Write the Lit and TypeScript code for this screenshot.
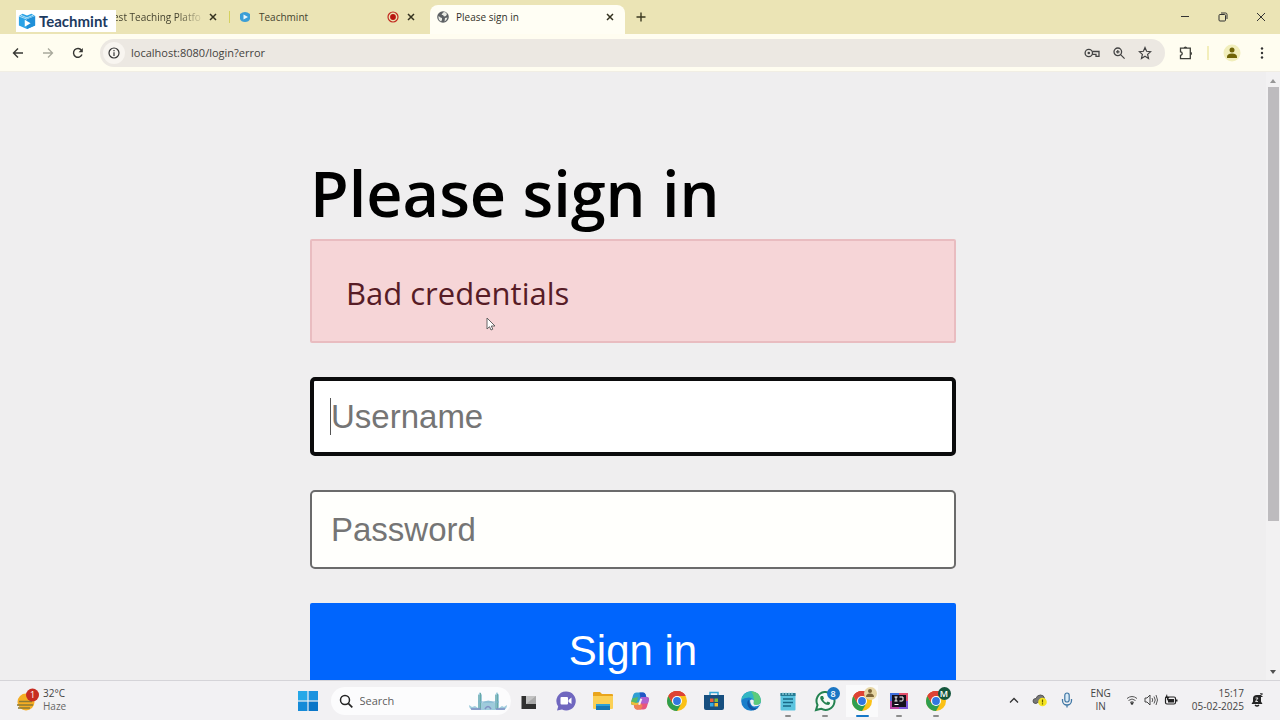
import { LitElement, html, css, svg, TemplateResult } from "lit";
import { customElement, property } from "lit/decorators.js";

const icon = (w: number, h: number, box: string, body: TemplateResult) =>
  html`<svg width=${w} height=${h} viewBox=${box} fill="none" aria-hidden="true">${body}</svg>`;

const chromeMark = svg`
  <circle cx="10" cy="10" r="10" fill="#fbc116"/>
  <path d="M10 10 1.34 5A10 10 0 0 1 18.66 5L10 5Z" fill="#dd4335"/>
  <path d="M1.34 5A10 10 0 0 0 10 20L14.3 12.5 10 10 5.7 12.5Z" fill="#2f9e4f"/>
  <path d="M10 5h8.66A10 10 0 0 0 1.34 5L5.7 12.5A5 5 0 0 1 10 5Z" fill="#dd4335"/>
  <circle cx="10" cy="10" r="5" fill="#fff"/><circle cx="10" cy="10" r="3.9" fill="#3277e0"/>`;

const close = icon(8, 8, "0 0 8 8", svg`<path d="m1 1 6 6M7 1 1 7" stroke="#34321f" stroke-width="1.5"/>`);

const bookMark = svg`
  <path d="M1 4.500 5 2l5 2 5-2 4 2.500V15l-9 4-9-4Z" fill="#2ba3e6"/>
  <path d="m1 4.500 9 3.500 9-3.500M3 3.500l7 3 7-3" stroke="#d3eefb" stroke-width=".9"/>
  <path d="M10 8v11l9-4V4.500Z" fill="#1f8fd8"/>
  <path d="m7.500 8.500 6.500 4-6.500 4Z" fill="#fff"/>`;

const I = {
  book: icon(18, 18, "0 0 20 20", bookMark),
  favicon: icon(12, 12, "0 0 12 12", svg`<path d="M1 3q5-4 10 0v5q-1 3-5 3T1 8Z" fill="#3b9ed6"/><path d="M4.500 3.500 9 6 4.500 8.500Z" fill="#eaf6fc"/>`),
  rec: icon(12, 12, "0 0 12 12", svg`<circle cx="6" cy="6" r="5" stroke="#c22a20" stroke-width="1.200"/><circle cx="6" cy="6" r="2.900" fill="#b8150f"/>`),
  globe: icon(12, 12, "0 0 12 12", svg`<circle cx="6" cy="6" r="5.800" fill="#5c6063"/><path d="M1.500 5 3.500 6.500 5 7v2L4 10.500Q1 9 1.500 5ZM6 1.500 8 1l2 2-1 2-2 .5L6 4 4.500 4ZM8 7l2.500-.5Q10 9 7.500 10.500Z" fill="#e9ebe4"/>`),
  plus: icon(10, 10, "0 0 10 10", svg`<path d="M5 .5v9M.5 5h9" stroke="#3b3920" stroke-width="1.400"/>`),
  min: icon(10, 10, "0 0 10 10", svg`<path d="M1 4.500h8" stroke="#333"/>`),
  restore: icon(10, 10, "0 0 10 10", svg`<rect x="1" y="2.500" width="6.500" height="6.500" rx="1" stroke="#333"/><path d="M3 1h4.500Q9 1 9 2.500V7" stroke="#333"/>`),
  x: icon(10, 10, "0 0 10 10", svg`<path d="m1 1 8 8M9 1 1 9" stroke="#333"/>`),
  back: icon(12, 12, "0 0 12 12", svg`<path d="M11 6H1.500M6 1.500 1.500 6 6 10.500" stroke="#373733" stroke-width="1.400"/>`),
  fwd: icon(12, 12, "0 0 12 12", svg`<path d="M1 6h9.500M6 1.500 10.500 6 6 10.500" stroke="#a9a99c" stroke-width="1.300"/>`),
  reload: icon(12, 12, "0 0 12 12", svg`<path d="M10 7.500A4.400 4.400 0 1 1 9.500 3.300" stroke="#373733" stroke-width="1.400"/><path d="M10.800 1v4.200H6.600Z" fill="#373733"/>`),
  info: icon(12, 12, "0 0 12 12", svg`<circle cx="6" cy="6" r="5" stroke="#333" stroke-width="1.200"/><path d="M6 5.200V9M6 3v1.300" stroke="#333" stroke-width="1.200"/>`),
  key: icon(16, 12, "0 0 16 12", svg`<circle cx="4.800" cy="6" r="3.700" stroke="#444" stroke-width="1.300"/><circle cx="4.800" cy="6" r="1.300" fill="#444"/><path d="M8.300 4.500H15V9.300h-3V7.300H8.300" stroke="#444" stroke-width="1.300"/>`),
  zoom: icon(12, 12, "0 0 12 12", svg`<circle cx="4.800" cy="4.800" r="3.800" stroke="#444" stroke-width="1.300"/><path d="m7.600 7.600 4 4M3 4.800h3.600M4.800 3v3.600" stroke="#444" stroke-width="1.200"/>`),
  star: icon(14, 14, "0 0 14 14", svg`<path d="m7 1.600 1.600 3.700 4 .4-3 2.700.9 4L7 10.300l-3.500 2.100.9-4-3-2.700 4-.4Z" stroke="#444" stroke-width="1.200"/>`),
  puzzle: icon(14, 14, "0 0 14 14", svg`<path d="M1.500 2.200H11.300v10.500H1.500V9.300a1.700 1.700 0 0 0 0-3.400Z" stroke="#3e3e38" stroke-width="1.300"/><path d="M4.700 2a1.700 1.500 0 0 1 3.400 0ZM11.500 5.800a1.500 1.700 0 0 1 0 3.400Z" fill="#3e3e38"/>`),
  dots: icon(4, 14, "0 0 4 14", svg`<circle cx="2" cy="2.500" r="1.200" fill="#333"/><circle cx="2" cy="7" r="1.200" fill="#333"/><circle cx="2" cy="11.500" r="1.200" fill="#333"/>`),
  person: icon(18, 18, "0 0 18 18", svg`<circle cx="9" cy="9" r="8.500" fill="#f1eebb"/><circle cx="9" cy="6" r="2.500" fill="#6f6406"/><path d="M4 13q0-3.500 5-3.500t5 3.500v1H4Z" fill="#6f6406"/>`),
  weather: icon(24, 24, "0 0 24 24", svg`<circle cx="11" cy="14" r="8.500" fill="#f5ae24"/><path d="M4 13.500h13M2 17h16M3 20h12" stroke="#8b7a35" stroke-width="1.300"/><circle cx="17.500" cy="7" r="6.500" fill="#c72d23"/>`),
  win: icon(20, 20, "0 0 20 20", svg`<path d="M0 0h9.400v9.400H0Z" fill="#25a8e8"/><path d="M10.600 0H20v9.400h-9.400Z" fill="#1c93df"/><path d="M0 10.600h9.400V20H0Z" fill="#168bd8"/><path d="M10.600 10.600H20V20h-9.400Z" fill="#0a76c8"/>`),
  search: icon(14, 14, "0 0 14 14", svg`<circle cx="6" cy="6" r="4.500" stroke="#242424" stroke-width="1.500"/><path d="m9.300 9.300 4 4" stroke="#242424" stroke-width="1.700"/>`),
  bridge: icon(40, 20, "0 0 40 20", svg`<path d="M1 14q0 5 5 5h28q5 0 5-5l-3 2-2-1-3 2V4l-2-3-2 3v8q-7-5-13 0V4l-2-3-2 3v13l-3-2-3 1Z" fill="#9fcbdc"/><path d="M11 4v14M12.500 2v16M28 4v14M29.500 3v15" stroke="#69aaa8"/><path d="M3 18h10M28 18h9M17 18q3-5 6 0" stroke="#8191c4" stroke-width="1.500"/><path d="M10 11h21" stroke="#7fb5cf"/>`),
  task: icon(20, 20, "0 0 20 20", svg`<path d="M7 5h10v8H7Z" fill="#c3c3c3"/><path d="M2.500 5H7v8h10v5H2.500Z" fill="#303030"/><path d="M7 13 17 5v8Z" fill="#a9a9a9"/>`),
  chat: icon(20, 20, "0 0 20 20", svg`<path d="M10 .5a9.500 9.500 0 1 1-4 18L1 19.500l1.200-4A9.500 9.500 0 0 1 10 .5Z" fill="#7067bf"/><rect x="4.500" y="6" width="7.500" height="7.500" rx="1" fill="#fff"/><path d="m12.500 9 3-2.500v6.500l-3-2Z" fill="#fff"/>`),
  folder: icon(22, 20, "0 0 22 20", svg`<path d="M1 2q0-1 1-1h6l2 2h10q1 0 1 1v4H1Z" fill="#e9a51c"/><path d="M1 5h20v12q0 1-1 1H2q-1 0-1-1Z" fill="#fbd055"/><path d="M4 13h14v6H4Z" fill="#1878b5"/><path d="M4 13h14v2H4Z" fill="#2da1d8"/>`),
  copilot: icon(20, 20, "0 0 20 20", svg`
    <path d="M6.500 1.500H13q2 0 2.600 2l.7 2.500H13q-1.800 0-2.300 2L9 14H3.500q-3 0-2.400-3L3 4.500q.8-3 3.500-3Z" fill="#2f9fd4"/>
    <path d="M9.500 1.500H13q2 0 2.600 2l.7 2.500H13q-1.800 0-2.300 2Z" fill="#2257c6"/>
    <path d="M2.200 7.500 1.100 11q-.6 3 2.400 3H5q1 0 1.500-2L8 6Z" fill="#58b966"/>
    <path d="M1.200 10.500q-.8 3.500 2.300 3.500H5l1 3q.5 1.500 2 1.500L9.300 14 10 11 6 12Z" fill="#eebd3a"/>
    <path d="M13.500 18.500H7q-2 0-2.600-2L3.700 14H7q1.800 0 2.300-2L11 6h5.500q3 0 2.400 3L17 15.500q-.8 3-3.500 3Z" fill="#e8557f"/>
    <path d="M11 6h5.500q3 0 2.400 3l-1 3.500H9.300Z" fill="#b061cf"/>
    <path d="M4 14h3q1.800 0 2.300-2l.4-1 3 4-2 3.500H7q-2 0-2.600-2Z" fill="#f08255"/>
    <path d="m10.300 7.500 2 .5-2.200 6-2-.5Z" fill="#f4eef4"/>`),
  chrome: icon(20, 20, "0 0 20 20", chromeMark),
  store: icon(20, 20, "0 0 20 20", svg`<path d="M6 5V1.500h8V5" stroke="#35a6d6" stroke-width="1.500"/><path d="M0 4h20v13q0 2-2 2H2q-2 0-2-2Z" fill="#174f7f"/><path d="M6 7.500h3.500V11H6Z" fill="#ee5c37"/><path d="M10.500 7.500H14V11h-3.500Z" fill="#82b93a"/><path d="M6 12h3.500v3.500H6Z" fill="#34a9e5"/><path d="M10.500 12H14v3.500h-3.500Z" fill="#f7be2b"/>`),
  edge: icon(20, 20, "0 0 20 20", svg`
    <circle cx="10" cy="10" r="9.800" fill="#1a7fcb"/>
    <path d="M.3 9A9.800 9.800 0 0 1 19.800 9q.3 5-4.800 5-3.500 0-2.500-2.500 1-4.500-4.500-5Q3 6.500.3 9Z" fill="#33b6c2"/>
    <path d="M10 .2Q19 .5 19.800 9q.3 5-4.800 5-3.500 0-2.500-2.500Q14 5 10 .2Z" fill="#5ccb7b"/>
    <path d="M7.500 8.500q-3 4.500 1 9 4 3.500 8.500-.5-8 1.500-9.500-8.500Z" fill="#1256a5"/>
    <path d="M12.600 9.300q-3 3.200-.4 5 3.500 2 7.300-.8v-1q-2 1.500-4.500 1.500-3.500 0-2.500-2.500Z" fill="#f2f1f3"/>
    <path d="M9 9.500q2-2 3.700 0-.8 2-.2 3.700l2 2.300q-5 .5-5.500-6Z" fill="#f2f1f3"/>`),
  note: icon(18, 20, "0 0 18 20", svg`<rect x="1.500" y="2" width="15" height="17.500" rx="1" fill="#5cc4df"/><path d="M1.500 2h15v3h-15Z" fill="#277b92"/><path d="M4 1v3M7 1v3M10 1v3M13 1v3" stroke="#b6e7f1"/><path d="M4 8h10M4 11.500h10M4 15h8" stroke="#176887" stroke-width="1.300"/>`),
  whatsapp: icon(22, 22, "0 0 22 22", svg`<path d="m2 20 1.500-5A9 9 0 1 1 7 18.700Z" fill="#f5faf6" stroke="#248250" stroke-width="2"/><path d="M7 6q-2 2 1 5.500t6.500 3.500q2-1 1.500-2.500l-2.500-1-1 1.200q-2-.5-3.500-3l1-1.200L9 6Z" fill="#248250"/>`),
  idea: icon(18, 20, "0 0 18 20", svg`<path d="M0 2h9l9 1v15H0Z" fill="#b743a0"/><path d="M0 2h9v8H0Z" fill="#3f6fdc"/><path d="M9 2h9v8H9Z" fill="#e2506b"/><path d="M9 10h9v8H9Z" fill="#7a55d8"/><rect x="2" y="4" width="14" height="12" fill="#14101c"/><path d="M4.500 6h3M6 6v4M4.500 10h3M9.500 6H13v3q0 1-1 1H9.500" stroke="#fff"/><path d="M4.500 13.500h4" stroke="#fff"/>`),
  up: icon(10, 8, "0 0 10 8", svg`<path d="m1 6.500 4-4 4 4" stroke="#333" stroke-width="1.300"/>`),
  cloud: icon(16, 14, "0 0 16 14", svg`<path d="M4 10.500Q1 10.500 1 8t3-2.500Q5 2 8.500 2t4 3.500Z" fill="#777" stroke="#565656"/><circle cx="10.500" cy="9" r="4.300" fill="#f4e421"/><path d="M10.500 6.500v3M10.500 10.300v1.200" stroke="#655c00" stroke-width="1.200"/>`),
  mic: icon(12, 16, "0 0 12 16", svg`<rect x="3.800" y="1" width="4.400" height="9" rx="2.200" fill="#d9ebf7" stroke="#4178a5" stroke-width="1.200"/><path d="M1.500 7v1.500a4.500 4.500 0 0 0 9 0V7M6 13v2.500" stroke="#4178a5" stroke-width="1.300"/>`),
  wifi: icon(12, 12, "0 0 12 12", svg`<path d="M1 4.500q5-4 10 0M2.500 6.500q3.500-3 7 0M4 8.500q2-1.700 4 0" stroke="#555"/><circle cx="6" cy="9.500" r="1.300" fill="#333"/>`),
  sound: icon(14, 12, "0 0 14 12", svg`<path d="M1 4h2l3-3v10L3 8H1Z" stroke="#444"/><path d="M8 4q1.500 2 0 4M10 2.500q2.500 3.500 0 7M12 1q3 5 0 10" stroke="#555"/>`),
  battery: icon(14, 12, "0 0 14 12", svg`<rect x="1.500" y="3" width="10" height="7" rx="1.500" stroke="#222" stroke-width="1.200"/><path d="M4 5h6v3.500H4ZM12 5.500h1.500v2H12Z" fill="#222"/><path d="M3 0 1 4h2v3l2.500-4h-2Z" fill="#222"/>`),
  bell: icon(12, 14, "0 0 12 14", svg`<path d="M.5 11 2 8.500V5.500Q2 2 6 2h4v6.500l1.500 2.500Z" fill="#242424"/><path d="M4 12q2 2 4 0" stroke="#242424" stroke-width="1.300"/><path d="M4.500 5H7L4.500 8.500H7" stroke="#ddd"/><path d="M9 .8h2.500L9 3.500h2.500" stroke="#242424"/>`),
  cursor: icon(10, 14, "0 0 10 14", svg`<path d="M1 1v11l2.500-2.300L5 13l1.800-.8L5.300 9H9Z" fill="#fff" stroke="#555" stroke-width=".9"/>`),
};

@customElement("browser-tabs")
class BrowserTabs extends LitElement {
  static styles = css`
    :host { display: flex; height: 34px; background: #ebe4b5; position: relative; font-size: 10px; line-height: 14px; color: #45432f; }
    .tab { display: flex; align-items: center; box-sizing: border-box; min-width: 0; }
    .first { flex: 0 1 229px; padding: 0 12px 0 113px; gap: 4px; }
    .second { flex: 0 1 201px; padding: 0 15px 0 9px; gap: 8px; border-left: 1px solid #dad67a; border-image: linear-gradient(transparent 34%, #d5d160 34%, #d5d160 66%, transparent 66%) 1; }
    .active { flex: 0 1 195px; margin-top: 5px; padding: 0 11px 5px 7px; gap: 7px; background: #fffef4; border-radius: 8px 8px 0 0; color: #33322a; }
    .title { flex: 1; white-space: nowrap; }
    .fade { mask-image: linear-gradient(90deg, #000 70%, transparent); }
    svg { flex: none; display: block; }
    button { border: 0; padding: 0; background: none; display: grid; place-items: center; }
    .add { width: 32px; }
    .controls { margin-left: auto; display: flex; gap: 28px; padding-right: 14px; }
    .brand { position: absolute; left: 16px; top: 10px; height: 22px; width: 100px; box-sizing: border-box; padding-left: 2px; background: #fff; display: flex; align-items: center; gap: 3px; color: #1d3a5f; font: 700 15px/20px Lato, sans-serif; }
  `;
  render() {
    return html`
      <div class="tab first"><span class="title fade">est Teaching Platfo</span><button aria-label="Close tab">${close}</button></div>
      <div class="tab second">${I.favicon}<span class="title">Teachmint</span>${I.rec}<button aria-label="Close tab">${close}</button></div>
      <div class="tab active">${I.globe}<span class="title">Please sign in</span><button aria-label="Close tab">${close}</button></div>
      <button class="add" aria-label="New tab">${I.plus}</button>
      <div class="controls">
        <button aria-label="Minimize">${I.min}</button><button aria-label="Restore">${I.restore}</button><button aria-label="Close">${I.x}</button>
      </div>
      <div class="brand">${I.book}<span>Teachmint</span></div>`;
  }
}

@customElement("browser-toolbar")
class BrowserToolbar extends LitElement {
  static styles = css`
    :host { display: flex; align-items: center; height: 38px; box-sizing: border-box; background: #fffdf0; border-bottom: 1px solid #f1eee4; padding: 0 16px 0 12px; }
    button { border: 0; padding: 0; background: none; display: grid; place-items: center; }
    .nav { display: flex; gap: 18px; }
    .address { flex: 1; display: flex; align-items: center; gap: 6px; height: 28px; margin: 0 14px 0 16px; padding: 0 13px 0 3px; border-radius: 14px; background: #ece8e2; }
    .info { width: 22px; height: 22px; border-radius: 11px; background: #f8f5f0; }
    input { flex: 1; min-width: 0; border: 0; padding: 0; background: none; outline: 0; color: #45433e; font: 11px/18px "Open Sans", sans-serif; }
    .actions { display: flex; align-items: center; gap: 13px; }
    .tools { display: flex; align-items: center; gap: 14px; }
    .menu { padding-left: 5px; }
    .rule { width: 2px; height: 14px; background: #f3eebb; }
    svg { display: block; }
  `;
  render() {
    return html`
      <div class="nav"><button aria-label="Back">${I.back}</button><button aria-label="Forward">${I.fwd}</button><button aria-label="Reload">${I.reload}</button></div>
      <div class="address">
        <button class="info" aria-label="Site information">${I.info}</button>
        <input aria-label="Address" value="localhost:8080/login?error" />
        <div class="actions"><button aria-label="Passwords">${I.key}</button><button aria-label="Zoom">${I.zoom}</button><button aria-label="Bookmark">${I.star}</button></div>
      </div>
      <div class="tools"><button aria-label="Extensions">${I.puzzle}</button><span class="rule"></span><button aria-label="Profile">${I.person}</button><button class="menu" aria-label="Menu">${I.dots}</button></div>`;
  }
}

@customElement("login-page")
class LoginPage extends LitElement {
  static styles = css`
    :host { display: flex; min-height: 0; overflow: hidden; background: #efeeef; }
    main { flex: 1; min-width: 0; overflow: hidden; }
    form { max-width: 646px; margin: 0 auto; padding-top: 82px; position: relative; }
    h1 { margin: 0; font: 600 63px/78px "Open Sans", sans-serif; color: #000; padding-bottom: 7px; white-space: nowrap; }
    .alert { box-sizing: border-box; min-height: 104px; margin-bottom: 34px; padding: 4px 34px 0; display: flex; align-items: center; border: 2px solid #e9bcc0; border-radius: 2px; background: #f6d5d7; color: #571c26; font-size: 31px; line-height: 50px; }
    .field { position: relative; margin-bottom: 34px; }
    .field input { display: block; width: 100%; height: 79px; box-sizing: border-box; padding: 0 19px; border: 2px solid #6b6b6b; border-radius: 5px; background: #fffffc; outline: 0; font: 33px/40px "Liberation Sans", sans-serif; }
    .field .focused { border: 4px solid #0b0b0c; padding: 0 17px; background: #fff; }
    input::placeholder { color: #757575; opacity: 1; }
    .caret { position: absolute; left: 20px; top: 21px; width: 1px; height: 37px; background: #555; }
    .submit { width: 100%; height: 96px; border: 0; border-radius: 2px; background: #0065fd; color: #fff; font: 42px/48px "Liberation Sans", sans-serif; }
    .cursor { position: absolute; left: 176px; top: 245px; }
    .scroll { width: 14px; background: #f2f1f2; display: flex; flex-direction: column; align-items: center; padding: 6px 0 5px; box-sizing: border-box; }
    .track { flex: 1; align-self: stretch; padding: 4px 1px 4px 2px; }
    .thumb { height: 75%; background: #bdbbbe; }
    svg { display: block; }
  `;
  render() {
    return html`
      <main><form @submit=${(e: Event) => e.preventDefault()}>
        <h1>Please sign in</h1>
        <div class="alert" role="alert">Bad credentials</div>
        <div class="field"><input class="focused" aria-label="Username" placeholder="Username" /><span class="caret"></span></div>
        <div class="field"><input type="password" aria-label="Password" placeholder="Password" /></div>
        <button class="submit" type="submit">Sign in</button>
        <span class="cursor">${I.cursor}</span>
      </form></main>
      <div class="scroll">
        ${icon(6, 5, "0 0 6 5", svg`<path d="m0 5 3-4 3 4Z" fill="#969696"/>`)}
        <div class="track"><div class="thumb"></div></div>
        ${icon(6, 5, "0 0 6 5", svg`<path d="m0 0 3 4 3-4Z" fill="#505050"/>`)}
      </div>`;
  }
}

@customElement("task-app")
class TaskApp extends LitElement {
  @property() label = "";
  @property() badge = "";
  @property() tone = "";
  @property() state = "";
  @property({ attribute: false }) glyph?: TemplateResult;
  static styles = css`
    :host { display: block; }
    button { position: relative; width: 37px; height: 38px; border: 0; padding: 0; background: none; display: grid; place-items: center; }
    svg { display: block; }
    .active { background: linear-gradient(#fafafb, #fafafb) center / 32px 32px no-repeat; }
    .mark { position: absolute; bottom: 3px; width: 6px; height: 2px; border-radius: 1px; background: #8c8c8c; }
    .active .mark { width: 13px; background: #1677c7; }
    .badge { position: absolute; right: 4px; top: 5px; width: 13px; height: 13px; border-radius: 7px; display: grid; place-items: center; color: #fff; font: 600 9px/13px "Open Sans", sans-serif; }
    .blue { background: #1b76c4; }
    .green { background: #14553c; }
    .tan { background: #e7d6a4; }
  `;
  render() {
    return html`<button class=${this.state} aria-label=${this.label}>
      ${this.glyph}
      ${this.tone ? html`<span class="badge ${this.tone}">${this.badge || icon(10, 10, "0 0 10 10", svg`<circle cx="5" cy="3" r="2" fill="#7a6337"/><path d="M1 9q0-3.500 4-3.500T9 9Z" fill="#7a6337"/>`)}</span>` : ""}
      ${this.state ? html`<span class="mark"></span>` : ""}
    </button>`;
  }
}

@customElement("task-bar")
class TaskBar extends LitElement {
  static styles = css`
    :host { display: grid; grid-template-columns: 1fr auto 1fr; height: 40px; box-sizing: border-box; border-top: 1px solid #d5d4d8; background: #f2f1f3; font-size: 10px; line-height: 13px; color: #444; }
    .weather { display: flex; align-items: center; gap: 4px; padding: 0 0 2px 15px; }
    .sun { position: relative; }
    .count { position: absolute; left: 11px; top: 0; width: 13px; text-align: center; color: #fff; font-size: 9px; }
    .haze { color: #666; }
    .middle { display: flex; align-items: center; padding-right: 28px; }
    .start { border: 0; padding: 0; background: none; margin-right: 13px; }
    .search { display: flex; align-items: center; gap: 7px; width: 180px; height: 28px; box-sizing: border-box; padding: 0 3px 0 8px; border-radius: 14px; background: #fcfcfd; }
    .search input { flex: 1; min-width: 0; border: 0; padding: 0; background: none; outline: 0; font: 11px/16px "Open Sans", sans-serif; }
    .search input::placeholder { color: #5e5e5e; opacity: 1; }
    .tray { display: flex; align-items: center; justify-content: flex-end; padding: 0 17px 2px 0; }
    .group { display: flex; align-items: center; gap: 13px; }
    .lang { text-align: center; margin: 0 15px 0 17px; }
    .status { display: flex; align-items: center; gap: 6px; margin-right: 14px; }
    .clock { text-align: right; margin-right: 7px; }
    svg { display: block; flex: none; }
  `;
  render() {
    return html`
      <div class="weather"><span class="sun">${I.weather}<span class="count">1</span></span><div><div>32°C</div><div class="haze">Haze</div></div></div>
      <div class="middle">
        <button class="start" aria-label="Start">${I.win}</button>
        <div class="search">${I.search}<input aria-label="Search" placeholder="Search" />${I.bridge}</div>
        <task-app label="Task view" .glyph=${I.task}></task-app>
        <task-app label="Chat" .glyph=${I.chat}></task-app>
        <task-app label="Files" .glyph=${I.folder}></task-app>
        <task-app label="Copilot" .glyph=${I.copilot}></task-app>
        <task-app label="Chrome" .glyph=${I.chrome}></task-app>
        <task-app label="Store" .glyph=${I.store}></task-app>
        <task-app label="Edge" .glyph=${I.edge}></task-app>
        <task-app label="Notepad" state="open" .glyph=${I.note}></task-app>
        <task-app label="WhatsApp" state="open" tone="blue" badge="8" .glyph=${I.whatsapp}></task-app>
        <task-app label="Chrome, current" state="active" tone="tan" .glyph=${I.chrome}></task-app>
        <task-app label="IntelliJ IDEA" state="open" .glyph=${I.idea}></task-app>
        <task-app label="Chrome, M" state="open" tone="green" badge="M" .glyph=${I.chrome}></task-app>
      </div>
      <div class="tray">
        <div class="group">${I.up}${I.cloud}${I.mic}</div>
        <div class="lang">ENG<br />IN</div>
        <div class="status">${I.wifi}${I.sound}${I.battery}</div>
        <div class="clock">15:17<br />05-02-2025</div>
        ${I.bell}
      </div>`;
  }
}

@customElement("app-root")
class AppRoot extends LitElement {
  static styles = css`
    :host { display: flex; flex-direction: column; height: 100vh; overflow: hidden; font-family: "Open Sans", "Noto Sans", sans-serif; }
    browser-tabs, browser-toolbar, task-bar { flex: none; }
    login-page { flex: 1; }
  `;
  render() {
    return html`<browser-tabs></browser-tabs><browser-toolbar></browser-toolbar><login-page></login-page><task-bar></task-bar>`;
  }
}
